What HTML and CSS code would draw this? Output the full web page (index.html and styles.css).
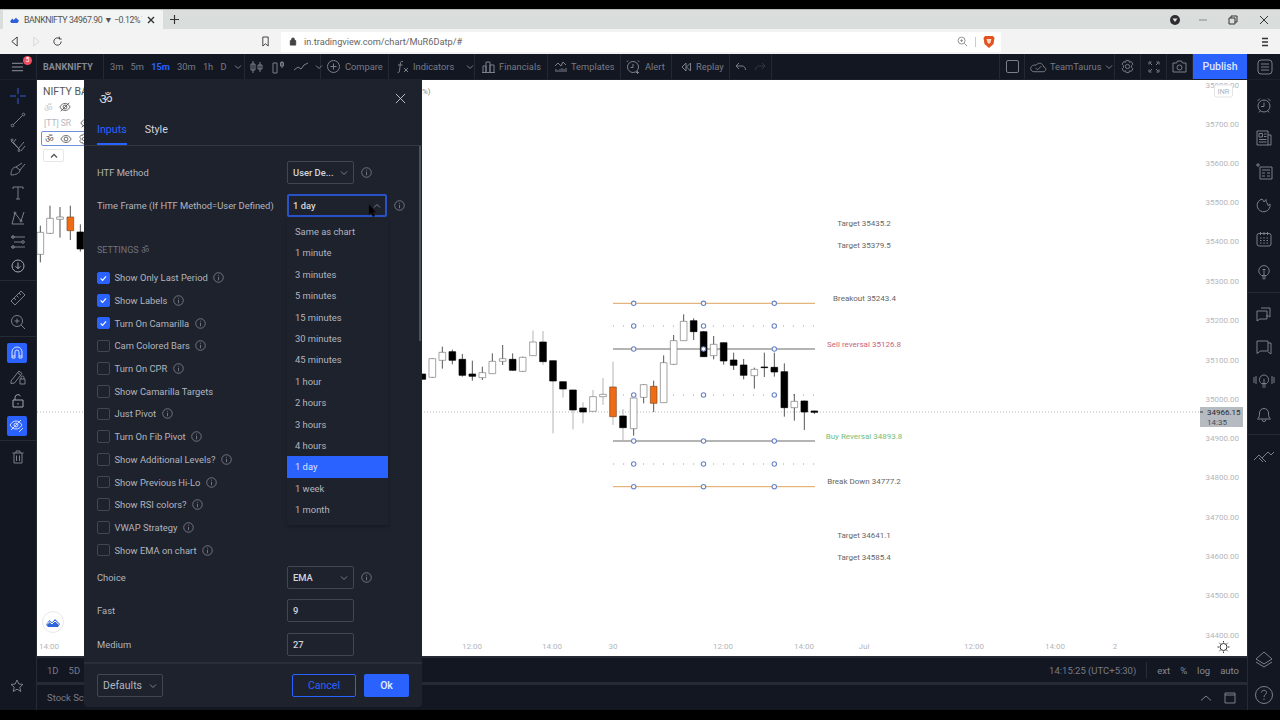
FILE: index.html
```html
<!DOCTYPE html>
<html lang="en">
<head>
<meta charset="utf-8">
<title>BANKNIFTY</title>
<link rel="stylesheet" href="styles.css">
</head>
<body>
<svg class="defs" width="0" height="0">
  <symbol id="info" viewBox="0 0 12 12"><circle cx="6" cy="6" r="5.2"/><path d="M6 5.2V9M6 3V4"/></symbol>
  <symbol id="chev" viewBox="0 0 8 8"><path d="M1 2.5L4 5.5L7 2.5"/></symbol>
  <symbol id="chevup" viewBox="0 0 8 8"><path d="M1 5.5L4 2.5L7 5.5"/></symbol>
  <symbol id="eye" viewBox="0 0 14 14"><path d="M1 7C3 3.500 5 3 7 3S11 3.500 13 7C11 10.500 9 11 7 11S3 10.500 1 7Z"/><circle cx="7" cy="7" r="2.200"/></symbol>
  <symbol id="eyeoff" viewBox="0 0 14 14"><path d="M1 7C3 3.500 5 3 7 3S11 3.500 13 7C11 10.500 9 11 7 11S3 10.500 1 7Z"/><circle cx="7" cy="7" r="2.200"/><path d="M2 12L12 2"/></symbol>
  <symbol id="gear" viewBox="0 0 16 16"><path d="M6.500 1.500H9.500L10 3.500L12 2.800L13.800 5.500L12.300 7V9L13.800 10.500L12 13.200L10 12.500L9.500 14.500H6.500L6 12.500L4 13.200L2.200 10.500L3.700 9V7L2.200 5.500L4 2.800L6 3.500Z"/><circle cx="8" cy="8" r="2.300"/></symbol>
  <symbol id="chat" viewBox="0 0 18 18"><path d="M6 3H15V12L13.500 11H11"/><path d="M2 6H12V14H5L2 16Z"/></symbol>
</svg>

<div class="screen">
  <div class="tabbar">
    <div class="tab">
      <svg class="favicon" viewBox="0 0 12 8"><path d="M0 6L3 2L5 4L8 1L12 5L10 8H2Z"/></svg>
      <span class="tab-title">BANKNIFTY 34967.90 ▼ −0.12% T</span>
      <svg class="ic-dark tab-x" viewBox="0 0 8 8"><path d="M1 1L7 7M7 1L1 7"/></svg>
    </div>
    <svg class="ic-dark tab-plus" viewBox="0 0 10 10"><path d="M5 0V10M0 5H10"/></svg>
    <div class="winctl">
      <svg class="profile" viewBox="0 0 10 10"><circle cx="5" cy="5" r="5"/><path class="profile-in" d="M2.500 3.500H7.500L5 7Z"/></svg>
      <svg class="ic-gray win-min" viewBox="0 0 10 10"><path d="M1 5H9"/></svg>
      <svg class="ic-dark win-res" viewBox="0 0 10 10"><path d="M3 3V1H9V7H7M1 3H7V9H1Z"/></svg>
      <svg class="ic-dark win-x" viewBox="0 0 10 10"><path d="M1 1L9 9M9 1L1 9"/></svg>
    </div>
  </div>

  <div class="navbar">
    <svg class="ic-dark nav-back" viewBox="0 0 10 12"><path d="M8 1L2 6L8 11Z"/></svg>
    <svg class="ic-pale nav-fwd" viewBox="0 0 10 12"><path d="M2 1L8 6L2 11Z"/></svg>
    <svg class="ic-dark nav-rel" viewBox="0 0 12 12"><path d="M10 6A4 4 0 1 1 8.500 2.900M8 .8V3.300H10.500"/></svg>
    <svg class="ic-dark nav-book" viewBox="0 0 10 12"><path d="M2 1H8V11L5 8.500L2 11Z"/></svg>
    <div class="urlbar">
      <svg class="lock" viewBox="0 0 8 10"><path d="M1 4H7V9H1ZM2.300 4V2.800A1.700 1.700 0 0 1 5.700 2.800V4"/></svg>
      <span class="url">in.tradingview.com/chart/MuR6Datp/#</span>
      <svg class="ic-gray url-zoom" viewBox="0 0 12 12"><circle cx="5" cy="5" r="3.800"/><path d="M8 8L11 11M3.500 5H6.500M5 3.500V6.500"/></svg>
      <span class="url-sep"></span>
      <svg class="brave" viewBox="0 0 12 14"><path d="M2 1H10L11.500 3L10.500 9L6 13L1.500 9L.5 3Z"/><path class="brave-in" d="M3.500 4H8.500L7.500 7.500L6 9L4.500 7.500Z"/></svg>
    </div>
    <svg class="ic-dark nav-menu" viewBox="0 0 8 10"><path d="M1 1.500H7M1 5H7M1 8.500H7"/></svg>
  </div>

  <header class="tvbar">
    <div class="seg seg-menu">
      <svg class="ic burger" viewBox="0 0 14 10"><path d="M1 1H13M1 5H13M1 9H13"/></svg>
      <span class="badge">5</span>
    </div>
    <div class="seg seg-sym"><b class="sym">BANKNIFTY</b></div>
    <div class="seg seg-int">
      <span>3m</span><span>5m</span><span class="int-on">15m</span><span>30m</span><span>1h</span><span>D</span>
      <svg class="ic chev chev-int"><use href="#chev"/></svg>
    </div>
    <div class="seg seg-type">
      <svg class="ic t16" viewBox="0 0 16 16"><path d="M4 2V14M2 5H6V11H2ZM11 3V13M9 6H13V10H9Z"/></svg>
      <svg class="ic t16" viewBox="0 0 16 16"><path d="M2 4H6V14H2ZM11 2V9M9.500 3.500H12.500V7H9.500Z"/></svg>
      <svg class="ic t16" viewBox="0 0 16 16"><path d="M1 11L5 8L8 10L11 6L15 4"/></svg>
      <svg class="ic chev"><use href="#chev"/></svg>
    </div>
    <div class="seg seg-cmp">
      <svg class="ic t13" viewBox="0 0 13 13"><circle cx="6.500" cy="6.500" r="6"/><path d="M6.500 3.500V9.500M3.500 6.500H9.500"/></svg>
      <span>Compare</span>
    </div>
    <div class="seg seg-ind">
      <svg class="ic t13" viewBox="0 0 13 13"><path d="M7 1.500C5 .8 4.500 2 4.300 4L3.500 11C3.300 12.500 2.500 12.800 1.500 12.300M2 5H6.500M8 8L12 12M12 8L8 12"/></svg>
      <span>Indicators</span>
      <svg class="ic chev chev-ind"><use href="#chev"/></svg>
    </div>
    <div class="seg seg-fin">
      <svg class="ic t13" viewBox="0 0 13 13"><path d="M1 12V6H4V12M4 12V2H8V12M8 12V5H12V12M0 12.500H13"/></svg>
      <span>Financials</span>
    </div>
    <div class="seg seg-tpl">
      <svg class="ic t13" viewBox="0 0 13 13"><path d="M1 6L4 3L7 6L9 2L12 5M2 9V12M4 10V12M6 9V12M8 8V12M10 9V12M12 8V12"/></svg>
      <span>Templates</span>
    </div>
    <div class="seg seg-alert">
      <svg class="ic t15" viewBox="0 0 15 15"><circle cx="7" cy="8" r="5.500"/><path d="M7 5V8.500H4.500M2 1.500L.8 3M12 1.500L13.200 3M11.500 12V15M10 13.500H13"/></svg>
      <span>Alert</span>
    </div>
    <div class="seg seg-rep">
      <svg class="ic t12" viewBox="0 0 12 12"><path d="M6 2L2 6L6 10ZM10.500 2L6.500 6L10.500 10Z"/></svg>
      <span>Replay</span>
    </div>
    <div class="seg seg-undo">
      <svg class="ic t12" viewBox="0 0 12 12"><path d="M4 2L1 5L4 8M1 5H7C9.500 5 10.500 7 10.500 9"/></svg>
      <svg class="ic-dim t12" viewBox="0 0 12 12"><path d="M8 2L11 5L8 8M11 5H5C2.500 5 1.500 7 1.500 9"/></svg>
    </div>
    <div class="tv-spacer"></div>
    <div class="seg seg-sq"><span class="square"></span></div>
    <div class="seg seg-team">
      <svg class="ic cloud" viewBox="0 0 18 12"><path d="M4 11H14C17 11 18 6.500 14.500 6C14 2 9 .5 6.500 4C2 3.500 .5 6 .8 8C1 10 2.500 11 4 11ZM6 7L8 9L12 5"/></svg>
      <span>TeamTaurus</span>
      <svg class="ic chev"><use href="#chev"/></svg>
    </div>
    <div class="seg seg-ic"><svg class="ic t15"><use href="#gear"/></svg></div>
    <div class="seg seg-ic"><svg class="ic t12" viewBox="0 0 12 12"><path d="M1 3.500V1H3.500M8.500 1H11V3.500M1 8.500V11H3.500M11 8.500V11H8.500M2 2L4 4M10 2L8 4M2 10L4 8M10 10L8 8"/></svg></div>
    <div class="seg seg-ic"><svg class="ic t15" viewBox="0 0 15 13"><path d="M1 3H4.500L5.500 1H9.500L10.500 3H14V12H1Z"/><circle cx="7.500" cy="7.500" r="2.500"/></svg></div>
    <button class="publish">Publish</button>
    <div class="seg-watch"><svg class="ic t16" viewBox="0 0 16 16"><rect x="1" y="1" width="14" height="14" rx="3"/><path d="M4 5H12M4 8H12M4 11H12"/></svg></div>
  </header>

  <div class="workspace">
    <aside class="lefttools">
      <div class="tgroup">
        <div class="tool"><svg class="ic-blue t16" viewBox="0 0 16 16"><path d="M8 0V6M8 10V16M0 8H6M10 8H16"/></svg></div>
        <div class="tool"><svg class="ic t16" viewBox="0 0 16 16"><circle cx="2.500" cy="13.500" r="1.300"/><circle cx="13.500" cy="2.500" r="1.300"/><path d="M3.500 12.500L12.500 3.500"/></svg></div>
        <div class="tool"><svg class="ic t16" viewBox="0 0 16 16"><path d="M1 4L8 11M6 2L3 6M14 5L8 12M15 9L11 14M3 5L10 13"/><circle cx="2" cy="3" r="1"/><circle cx="9" cy="13.500" r="1"/></svg></div>
        <div class="tool"><svg class="ic t16" viewBox="0 0 16 16"><path d="M1 14C1 9 3 6 6 6L10 9C10 12 6 14 1 14ZM6 6L12 2M10 9L15 3"/></svg></div>
        <div class="tool"><svg class="ic t16" viewBox="0 0 16 16"><path d="M3 4V2H13V4M8 2V14M6 14H10"/></svg></div>
        <div class="tool"><svg class="ic t16" viewBox="0 0 16 16"><path d="M2 14L5 3L11 11L14 2M2 14L14 14"/><circle cx="5" cy="3" r="1"/><circle cx="11" cy="11" r="1"/></svg></div>
        <div class="tool"><svg class="ic t16" viewBox="0 0 16 16"><path d="M1 3H15M4 8H12M1 13H15"/><circle cx="3" cy="3" r="1.300"/><circle cx="3" cy="13" r="1.300"/><circle cx="13" cy="8" r="1.300"/></svg></div>
        <div class="tool"><svg class="ic-hi t14" viewBox="0 0 14 14"><circle cx="7" cy="7" r="6"/><path d="M7 3.500V9.500M4.500 7.200L7 9.700L9.500 7.200"/></svg></div>
      </div>
      <div class="tgroup">
        <div class="tool"><svg class="ic t16" viewBox="0 0 16 16"><path d="M1 11L11 1L15 5L5 15ZM4 8L6 10M6.500 5.500L8.500 7.500M9 3L11 5"/></svg></div>
        <div class="tool"><svg class="ic t16" viewBox="0 0 16 16"><circle cx="7" cy="7" r="5.500"/><path d="M11 11L15 15M4.500 7H9.500M7 4.500V9.500"/></svg></div>
      </div>
      <div class="tgroup">
        <div class="tool tool-on"><svg class="ic-white t14" viewBox="0 0 14 14"><path d="M2 12V6A5 5 0 0 1 12 6V12H9V6A2 2 0 0 0 5 6V12Z"/><path d="M2 10H5M9 10H12"/></svg></div>
        <div class="tool"><svg class="ic t16" viewBox="0 0 16 16"><path d="M1 12L9 2L12 4.500L4.500 14L1 14.500ZM7.500 3.500L10.500 6"/><path d="M10 10H15V15H10ZM11 10V8.500A1.500 1.500 0 0 1 14 8.500V10"/></svg></div>
        <div class="tool"><svg class="ic-hi t14" viewBox="0 0 14 14"><path d="M2 6H12V13H2ZM4 6V3.500A3 3 0 0 1 9.500 2"/><path d="M7 9V10.500"/></svg></div>
        <div class="tool tool-on"><svg class="ic-white t16" viewBox="0 0 16 16"><path d="M1 7C3 4 5 3 7 3S11 4 13 7C11 10 9 11 7 11S3 10 1 7Z"/><circle cx="7" cy="7" r="2"/><path d="M2 12L12 2M10 14L14 10"/></svg></div>
      </div>
      <div class="tgroup tgroup-last">
        <div class="tool"><svg class="ic t14" viewBox="0 0 14 14"><path d="M1.500 3H12.500M5 3V1H9V3M3 3V13H11V3M5.500 5.500V11M8.500 5.500V11"/></svg></div>
      </div>
      <svg class="ic star" viewBox="0 0 14 14"><path d="M7 1L8.800 5L13 5.400L9.800 8.200L10.800 12.500L7 10.200L3.200 12.500L4.200 8.200L1 5.400L5.200 5Z"/></svg>
    </aside>

    <div class="center">
      <div class="chart">
        <svg class="chart-svg" viewBox="37 80 1210 576" preserveAspectRatio="none">
          <path class="priceline" d="M37 412H1200"/>
          <g transform="translate(30 80) scale(.33333)">
            <path class="wick" d="M31 437V547M60 377V462M90 381V473M121 377V480M151 433V515"/>
            <path class="white" d="M21 457h20v66h-20zM50 415h20v45h-20zM80 411h20v7h-20z"/>
            <path class="orange" d="M111 411h20v41h-20z"/>
            <path class="black" d="M141 456h20v51h-20z"/>
          </g>
          <path class="cam cam-o" d="M613 303.300H815M613 486.700H815"/>
          <path class="cam cam-d" d="M613 349H815M613 441H815"/>
          <path class="cam-dots" d="M613 326H815M613 395H815M613 464H815"/>
          <g transform="translate(420 280) scale(.33333)">
            <path class="wick" d="M37 235V293M67 200V266M97 209V253M127 222V290M157 242V302M187 260V300M217 220V281M248 195V255M278 220V272M308 230V275M641 355V467M671 313V370M701 302V396M731 226V368M761 165V254M791 103V182M821 115V180M851 153V231M881 168V238M911 188V254M941 218V270M971 237V298M1003 263V326M1033 218V291M1063 218V290M1093 250V410M1123 342V422M1153 362V450M1183 392V402"/>
            <path class="wick-pale" d="M339 152V228M369 153V255M399 242V460M429 305V353M459 330V448M489 367V430M519 330V395M549 294V375M579 245V435M609 387V483"/>
            <path class="white" d="M27 236h20v56h-20zM57 217h20v24h-20zM177 278h20v15h-20zM207 244h20v37h-20zM238 236h20v8h-20zM298 232h20v42h-20zM329 186h20v41h-20zM509 350h20v44h-20zM539 343h20v7h-20zM631 354h20v92h-20zM661 314h20v38h-20zM721 248h20v120h-20zM751 182h20v71h-20zM781 124h20v58h-20zM871 193h20v34h-20zM993 268h20v19h-20zM1113 364h20v19h-20z"/>
            <path class="black" d="M0 282h17v16h-17zM87 215h20v26h-20zM117 238h20v48h-20zM147 282h20v7h-20zM268 238h20v33h-20zM359 186h20v59h-20zM389 242h20v61h-20zM419 305h20v22h-20zM449 330h20v60h-20zM479 384h20v12h-20zM599 408h20v35h-20zM811 122h20v33h-20zM841 155h20v75h-20zM901 188h20v55h-20zM931 240h20v16h-20zM961 255h20v31h-20zM1023 261h20v2h-20zM1053 262h20v14h-20zM1083 275h20v108h-20zM1143 363h20v33h-20zM1173 393h20v4h-20z"/>
            <path class="orange" d="M569 321h20v89h-20zM691 319h20v51h-20z"/>
          </g>
          <g id="rowdots" class="cdots"><circle cx="633.700" cy="303.300" r="2.200"/><circle cx="703.500" cy="303.300" r="2.200"/><circle cx="774.300" cy="303.300" r="2.200"/></g>
          <use href="#rowdots" y="22.700"/>
          <use href="#rowdots" y="45.700"/>
          <use href="#rowdots" y="91.700"/>
          <use href="#rowdots" y="137.700"/>
          <use href="#rowdots" y="160.700"/>
          <use href="#rowdots" y="183.400"/>

          <g class="lab">
            <text x="864" y="226">Target 35435.2</text>
            <text x="864" y="248">Target 35379.5</text>
            <text x="864.500" y="301">Breakout 35243.4</text>
            <text class="lab-red" x="864" y="347">Sell reversal 35126.8</text>
            <text class="lab-green" x="864" y="439">Buy Reversal 34893.8</text>
            <text x="864" y="484">Break Down 34777.2</text>
            <text x="864" y="538">Target 34641.1</text>
            <text x="864" y="560">Target 34585.4</text>
          </g>
          <g class="axis">
            <text x="1239" y="87.500">35800.00</text>
            <text x="1239" y="127">35700.00</text>
            <text x="1239" y="166">35600.00</text>
            <text x="1239" y="205">35500.00</text>
            <text x="1239" y="244">35400.00</text>
            <text x="1239" y="284">35300.00</text>
            <text x="1239" y="323">35200.00</text>
            <text x="1239" y="362.500">35100.00</text>
            <text x="1239" y="402">35000.00</text>
            <text x="1239" y="441">34900.00</text>
            <text x="1239" y="480">34800.00</text>
            <text x="1239" y="520">34700.00</text>
            <text x="1239" y="559">34600.00</text>
            <text x="1239" y="598">34500.00</text>
            <text x="1239" y="637.500">34400.00</text>
          </g>
          <g class="times">
            <text x="49" y="649">14:00</text>
            <text x="472" y="649">12:00</text>
            <text x="552" y="649">14:00</text>
            <text x="613" y="649">30</text>
            <text x="723" y="649">12:00</text>
            <text x="804" y="649">14:00</text>
            <text x="864" y="649">Jul</text>
            <text x="974" y="649">12:00</text>
            <text x="1055" y="649">14:00</text>
            <text x="1115" y="649">2</text>
          </g>
          <text class="pct" x="422" y="94">%)</text>
          <rect class="tag" x="1200" y="407" width="43" height="20"/>
          <path class="tagtick" d="M1200 412H1203"/>
          <text class="tag-a" x="1207" y="415">34966.15</text>
          <text class="tag-b" x="1207" y="424.500">14:35</text>
          <rect class="inr" x="1214.500" y="85" width="18" height="12" rx="2"/>
          <text class="inr-t" x="1223.500" y="93.500">INR</text>
          <g class="sun" transform="translate(1223.500 647)">
            <circle r="3.500"/>
            <path d="M0 -6V-4.500M0 6V4.500M-6 0H-4.500M6 0H4.500M-4.200 -4.200L-3.200 -3.200M4.200 -4.200L3.200 -3.200M-4.200 4.200L-3.200 3.200M4.200 4.200L3.200 3.200"/>
          </g>
        </svg>

        <div class="legend">
          <div class="lg-title">NIFTY BA</div>
          <div class="lg-row"><span class="om om-pale">ॐ</span><svg class="ic-dk2 t12"><use href="#eyeoff"/></svg></div>
          <div class="lg-row"><span class="lg-tt">[TT] SR</span><svg class="ic-dk2 t12 lg-tt-eye"><use href="#eyeoff"/></svg></div>
          <div class="lg-row lg-sel"><span class="om">ॐ</span><svg class="ic-dk2 t12"><use href="#eye"/></svg><svg class="ic-dk2 t12"><use href="#gear"/></svg></div>
          <div class="lg-collapse"><svg class="ic-dk2 lg-up"><use href="#chevup"/></svg></div>
        </div>
        <div class="logo-bubble"><svg class="bubble-ic" viewBox="0 0 14 9"><path d="M0 6.500L3.500 2L6 4.500L9 1L14 6L12 9H2Z"/><path class="bubble-line" d="M1 6.500L3.500 3.800L6 6L9 3L13 6.500"/></svg></div>
      </div>

      <div class="bar1">
        <span>1D</span><span>5D</span>
        <div class="bar-spacer"></div>
        <span class="clock">14:15:25 (UTC+5:30)</span>
        <span class="bar-sep"></span>
        <span class="opt">ext</span><span class="opt">%</span><span class="opt">log</span><span class="opt">auto</span>
      </div>
      <div class="bar2">
        <span>Stock Screener</span>
        <div class="bar-spacer"></div>
        <svg class="ic bar-up" viewBox="0 0 12 8"><path d="M1 6.500L6 2L11 6.500"/></svg>
        <svg class="ic bar-win" viewBox="0 0 12 12"><path d="M1 1H11V11H1ZM1 3H11"/></svg>
      </div>
    </div>

    <aside class="righttools">
      <div class="tgroup-r">
        <div class="rtool"><svg class="ic t16" viewBox="0 0 16 16"><circle cx="8" cy="9" r="6"/><path d="M8 5.500V9.500H5M1.500 4L4 1.500M14.500 4L12 1.500M4 14L3 15.500M12 14L13 15.500"/></svg></div>
        <div class="rtool"><svg class="ic t16" viewBox="0 0 16 16"><path d="M1 1H12V15H1ZM12 5H15V15H12M3 3.500H6.500V7H3ZM8 4H10.500M8 6.500H10.500M3 9.500H10.500M3 12H10.500"/></svg></div>
        <div class="rtool"><svg class="ic t18" viewBox="0 0 18 18"><path d="M5 5V4H17V16H5ZM7 7H15M7 10H10M12 10H15M7 13H10M12 13H15M3 0V4M1 2H5"/></svg></div>
        <div class="rtool"><svg class="ic t16" viewBox="0 0 16 16"><path d="M6 2A6.500 6.500 0 1 0 14 7L12 8.500C11.500 6 10 5.500 10 2.500L8 5C7.500 4 7 3 6 2Z"/></svg></div>
        <div class="rtool"><svg class="ic t16" viewBox="0 0 16 16"><rect x="1" y="2.500" width="14" height="12.500" rx="2"/><path d="M4.500 1V4M8 1V4M11.500 1V4M4 7H5.500M7.300 7H8.800M10.500 7H12M4 9.500H5.500M7.300 9.500H8.800M10.500 9.500H12M4 12H5.500M7.300 12H8.800M10.500 12H12"/></svg></div>
        <div class="rtool"><svg class="ic t16" viewBox="0 0 16 16"><path d="M5.500 11.500C3.500 10 2.800 8.500 2.800 6.800A5.200 5.200 0 0 1 13.200 6.800C13.200 8.500 12.500 10 10.500 11.500ZM6 13H10M6.500 14.800H9.500M6.500 5.500H9.500M8 5.500V11"/></svg></div>
      </div>
      <div class="tgroup-r">
        <div class="rtool"><svg class="ic t18"><use href="#chat"/></svg></div>
        <div class="rtool"><svg class="ic t18" viewBox="0 0 18 18"><path d="M2 3H13V13H5.500L2 15.500ZM13 5H16V16L13 13.800"/></svg></div>
        <div class="rtool"><svg class="ic t22" viewBox="0 0 22 18"><path d="M8.500 11.500C7 10.500 6.500 9 6.500 7.500A4.500 4.500 0 0 1 15.500 7.500C15.500 9 15 10.500 13.500 11.500ZM9 13H13M9.500 15H12.500M11 7V11M1 5V11M3 4V12M19 4V12M21 5V11"/></svg></div>
        <div class="rtool"><svg class="ic t16" viewBox="0 0 16 16"><path d="M1.500 13C3 12 3.500 10.500 3.500 7A4.500 4.500 0 0 1 12.500 7C12.500 10.500 13 12 14.500 13ZM6 13.500A2 2 0 0 0 10 13.500"/></svg></div>
      </div>
      <div class="tgroup-r">
        <div class="rtool"><svg class="ic t22" viewBox="0 0 22 18"><path d="M1 13L6 8L11 13L13 15M9 11L15 5L18 8L21 5M6 11L10 15"/></svg></div>
      </div>
      <div class="rt-bottom">
        <svg class="ic t20" viewBox="0 0 20 20"><path d="M10 2L18 9L10 14L2 9ZM2 12L10 17L18 12"/></svg>
        <svg class="ic t20" viewBox="0 0 20 20"><circle cx="10" cy="10" r="8.500"/><path d="M7.500 7.500C7.500 4.500 12.500 4.500 12.500 7.500C12.500 9.500 10 9.500 10 12M10 13.500V15"/></svg>
      </div>
    </aside>
  </div>

  <section class="dialog">
    <div class="dlg-head">
      <div class="dlg-title"><span class="om om-title">ॐ</span>
        <svg class="ic-close" viewBox="0 0 12 12"><path d="M1 1L11 11M11 1L1 11"/></svg>
      </div>
      <div class="dlg-tabs"><span class="dtab dtab-on">Inputs</span><span class="dtab">Style</span></div>
    </div>
    <div class="dlg-body">
      <div class="scrollthumb"></div>
      <div class="frow">
        <span class="flabel">HTF Method</span>
        <div class="sel"><span>User De...</span><svg class="ic chev"><use href="#chev"/></svg></div>
        <svg class="inf"><use href="#info"/></svg>
      </div>
      <div class="frow">
        <span class="flabel">Time Frame (If HTF Method=User Defined)</span>
        <div class="sel sel-open"><span>1 day</span><svg class="ic chev"><use href="#chevup"/></svg>
          <svg class="cursor" viewBox="0 0 10 15"><path d="M1 0V12L3.500 9.500L5.500 14L7.500 13L5.500 8.800H9Z"/></svg>
          <ul class="dropdown">
            <li>Same as chart</li><li>1 minute</li><li>3 minutes</li><li>5 minutes</li><li>15 minutes</li><li>30 minutes</li><li>45 minutes</li><li>1 hour</li><li>2 hours</li><li>3 hours</li><li>4 hours</li><li class="dd-on">1 day</li><li>1 week</li><li>1 month</li>
          </ul>
        </div>
        <svg class="inf"><use href="#info"/></svg>
      </div>
      <div class="settings">SETTINGS <span class="om">ॐ</span></div>
      <label class="crow"><span class="box box-on"><svg viewBox="0 0 12 12"><path d="M3 6.200L5.200 8.400L9.200 3.800"/></svg></span>Show Only Last Period<svg class="inf"><use href="#info"/></svg></label>
      <label class="crow"><span class="box box-on"><svg viewBox="0 0 12 12"><path d="M3 6.200L5.200 8.400L9.200 3.800"/></svg></span>Show Labels<svg class="inf"><use href="#info"/></svg></label>
      <label class="crow"><span class="box box-on"><svg viewBox="0 0 12 12"><path d="M3 6.200L5.200 8.400L9.200 3.800"/></svg></span>Turn On Camarilla<svg class="inf"><use href="#info"/></svg></label>
      <label class="crow"><span class="box"></span>Cam Colored Bars<svg class="inf"><use href="#info"/></svg></label>
      <label class="crow"><span class="box"></span>Turn On CPR<svg class="inf"><use href="#info"/></svg></label>
      <label class="crow"><span class="box"></span>Show Camarilla Targets</label>
      <label class="crow"><span class="box"></span>Just Pivot<svg class="inf"><use href="#info"/></svg></label>
      <label class="crow"><span class="box"></span>Turn On Fib Pivot<svg class="inf"><use href="#info"/></svg></label>
      <label class="crow"><span class="box"></span>Show Additional Levels?<svg class="inf"><use href="#info"/></svg></label>
      <label class="crow"><span class="box"></span>Show Previous Hi-Lo<svg class="inf"><use href="#info"/></svg></label>
      <label class="crow"><span class="box"></span>Show RSI colors?<svg class="inf"><use href="#info"/></svg></label>
      <label class="crow"><span class="box"></span>VWAP Strategy<svg class="inf"><use href="#info"/></svg></label>
      <label class="crow"><span class="box"></span>Show EMA on chart<svg class="inf"><use href="#info"/></svg></label>
      <div class="frow frow-choice">
        <span class="flabel">Choice</span>
        <div class="sel"><span>EMA</span><svg class="ic chev"><use href="#chev"/></svg></div>
        <svg class="inf"><use href="#info"/></svg>
      </div>
      <div class="frow frow-fast"><span class="flabel">Fast</span><div class="sel"><span>9</span></div></div>
      <div class="frow"><span class="flabel">Medium</span><div class="sel"><span>27</span></div></div>
    </div>
    <div class="dlg-foot">
      <div class="btn btn-def">Defaults<svg class="ic chev"><use href="#chev"/></svg></div>
      <div class="foot-spacer"></div>
      <div class="btn btn-cancel">Cancel</div>
      <div class="btn btn-ok">Ok</div>
    </div>
  </section>
</div>
</body>
</html>
```
FILE: styles.css
```css
* { box-sizing: border-box; }
html, body { margin: 0; height: 720px; overflow: hidden; background: #000; }
body { font-family: Roboto, "Noto Sans", sans-serif; font-size: 9.5px; }
.defs { position: absolute; }
svg { display: block; flex: none; }
.screen { position: relative; height: 720px; padding: 9px 0 10px; display: flex; flex-direction: column; }

/* shared icon strokes */
.ic, .ic-dark, .ic-gray, .ic-pale, .ic-blue, .ic-hi, .ic-white, .ic-dim, .ic-dk2, .inf, .ic-close { fill: none; stroke-width: 1; }
.ic { stroke: #7b7f8a; }
.ic-dark { stroke: #333; }
.ic-gray { stroke: #8a8a8a; }
.ic-pale { stroke: #d4d4d4; }
.ic-blue { stroke: #2f5fd8; }
.ic-hi { stroke: #a5a8b0; }
.ic-white { stroke: #d8def5; }
.ic-dim { stroke: #33373f; }
.ic-dk2 { stroke: #555; }
.t12 { width: 12px; height: 12px; }
.t13 { width: 13px; height: 13px; }
.t14 { width: 14px; height: 14px; }
.t15 { width: 15px; height: 15px; }
.t16 { width: 16px; height: 16px; }
.t18 { width: 18px; height: 18px; }
.t20 { width: 20px; height: 20px; }
.t22 { width: 22px; height: 18px; }
.chev { width: 8px; height: 8px; }

/* browser chrome */
.tabbar { height: 20px; flex: none; display: flex; align-items: stretch; padding-left: 3px; background: #d9dddc; border-top: 1px solid #b9bcbc; }
.tab { width: 160px; display: flex; align-items: center; background: #f2f3f3; padding: 0 5px 0 6px; gap: 5px; }
.favicon { width: 9px; height: 6px; fill: #2f5fd8; margin-left: 1px; }
.tab-title { width: 118px; overflow: hidden; white-space: nowrap; color: #555; font-size: 8.800px; letter-spacing: -.45px; }
.tab-x { width: 8px; height: 8px; stroke-width: 1.400; }
.tab-plus { width: 9px; height: 9px; margin: 5px 0 0 7px; stroke-width: 1.300; }
.winctl { margin-left: auto; display: flex; align-items: center; padding-right: 11px; }
.profile { width: 10px; height: 10px; fill: #2e2e30; margin-right: 18px; }
.profile-in { fill: #e4e4e4; }
.win-min { width: 10px; height: 10px; margin-right: 20px; }
.win-res { width: 10px; height: 10px; margin-right: 21px; }
.win-x { width: 10px; height: 10px; }

.navbar { height: 25px; flex: none; display: flex; align-items: center; background: #f3f3f3; padding-left: 10px; }
.nav-back { width: 9px; height: 11px; }
.nav-fwd { width: 9px; height: 11px; margin-left: 13px; }
.nav-rel { width: 11px; height: 11px; margin-left: 11px; }
.nav-book { width: 9px; height: 11px; margin-left: 198px; }
.urlbar { width: 720px; height: 20px; margin-left: 11px; background: #fff; display: flex; align-items: center; padding-left: 8px; }
.lock { width: 8px; height: 9px; fill: #444; stroke: #444; }
.url { margin-left: 7px; color: #666; font-size: 9.200px; }
.url-zoom { width: 11px; height: 11px; margin-left: auto; margin-right: -2px; }
.url-sep { width: 1px; height: 10px; background: #ccc; margin: 0 7px 0 9px; }
.brave { width: 12px; height: 14px; fill: #e0521f; margin-right: 6px; }
.brave-in { fill: #f8d9c8; }
.nav-menu { width: 8px; height: 10px; margin-left: 260px; stroke-width: 1.300; }

/* tradingview header */
.tvbar { height: 26px; flex: none; display: flex; background: #131722; border-bottom: 1px solid #1c2029; color: #787b86; font-size: 9.300px; }
.seg { display: flex; align-items: center; border-right: 1px solid #242832; position: relative; flex: none; }
.seg-menu { width: 37px; padding-left: 11px; }
.burger { width: 13px; height: 10px; stroke: #9a9da6; }
.badge { position: absolute; left: 23px; top: 2px; width: 9px; height: 9px; border-radius: 50%; background: #ef4f5f; color: #fff; font-size: 6.500px; line-height: 9px; text-align: center; }
.seg-sym { width: 67px; padding-left: 6px; }
.sym { font-weight: 700; color: #858995; font-size: 9px; letter-spacing: .1px; }
.seg-int { width: 141px; padding-left: 6px; gap: 7.200px; }
.int-on { color: #2962ff; font-weight: 700; }
.chev-int { margin-left: auto; margin-right: 4px; }
.seg-type { width: 76px; padding-left: 4px; gap: 6px; }
.seg-cmp { width: 68px; padding-left: 6px; gap: 5px; }
.seg-ind { width: 86px; padding-left: 7px; gap: 4px; }
.chev-ind { margin-left: 8px; }
.seg-fin { width: 73px; padding-left: 7px; gap: 4px; }
.seg-tpl { width: 73px; padding-left: 6px; gap: 4px; }
.seg-alert { width: 51px; padding-left: 5px; gap: 4px; }
.seg-rep { width: 58px; padding-left: 8px; gap: 4px; }
.seg-undo { width: 42px; padding-left: 5px; gap: 7px; }
.tv-spacer { flex: 1; }
.seg-sq { width: 26px; justify-content: center; border-left: 1px solid #242832; }
.square { width: 13px; height: 13px; border: 1px solid #7b7f8a; border-radius: 2px; }
.seg-team { width: 90px; padding-left: 5px; gap: 3px; }
.cloud { width: 17px; height: 12px; }
.seg-ic { width: 26px; justify-content: center; }
.publish { width: 54px; flex: none; border: 0; padding: 0; margin: 0; background: #2962ff; color: #dfe7ff; font: 500 10.500px Roboto, sans-serif; }
.seg-watch { width: 33px; flex: none; display: flex; align-items: center; justify-content: center; padding-left: 2px; }

/* page */
.workspace { flex: 1; display: flex; min-height: 0; background: #262a33; }
.lefttools { width: 36px; flex: none; background: #131722; display: flex; flex-direction: column; padding-top: 4px; margin-right: 1px; }
.tgroup { border-bottom: 1px solid #262a33; padding-bottom: 2px; margin-bottom: 4px; }
.tgroup-last { border: 0; }
.tool { height: 24.300px; display: flex; align-items: center; justify-content: center; }
.tool-on { width: 20px; height: 20px; margin: 2px 8px 2px 7px; background: #2962ff; border-radius: 2px; }
.star { width: 14px; height: 14px; margin: auto 0 17px 10px; }

.center { flex: 1; min-width: 0; display: flex; flex-direction: column; }
.chart { flex: 1; min-height: 0; position: relative; background: #fff; overflow: hidden; }
.chart-svg { width: 100%; height: 100%; }
.wick { fill: none; stroke: #555; stroke-width: 3; }
.wick-pale { fill: none; stroke: #b4b4b4; stroke-width: 3; }
.white { fill: #fff; stroke: #777; stroke-width: 2; }
.black { fill: #000; stroke: #000; stroke-width: 2; }
.orange { fill: #ef6c15; stroke: #7a4a25; stroke-width: 2; }
.priceline { stroke: #b5b5b5; stroke-width: 1; stroke-dasharray: 1 2; fill: none; }
.cam { fill: none; stroke-width: 1; }
.cam-o { stroke: #dda35c; }
.cam-d { stroke: #6a6a6a; stroke-width: 1.200; }
.cam-dots { fill: none; stroke: #a0a0a0; stroke-width: 1; stroke-dasharray: 1 9; }
.cdots { fill: #fff; stroke: #6b84c4; stroke-width: 1.100; }
.lab { font: 8px Roboto, sans-serif; fill: #666; text-anchor: middle; }
.lab-red { fill: #c9637e; }
.lab-green { fill: #78bc78; }
.axis { font: 8px Roboto, sans-serif; fill: #b4b6bc; text-anchor: end; }
.times { font: 8px Roboto, sans-serif; fill: #b4b6bc; text-anchor: middle; }
.pct { font: 8px Roboto, sans-serif; fill: #888; }
.tag { fill: #b6bbc2; }
.tagtick { stroke: #333; fill: none; }
.tag-a { font: 8px Roboto, sans-serif; fill: #26282e; }
.tag-b { font: 8px Roboto, sans-serif; fill: #4a4d55; }
.inr { fill: #fff; stroke: #e3e4e8; }
.inr-t { font: 7.500px Roboto, sans-serif; fill: #b0b3ba; text-anchor: middle; }
.sun { fill: none; stroke: #333; stroke-width: 1; }

.legend { position: absolute; left: 4px; top: 5px; width: 60px; color: #555; }
.lg-title { font-size: 10.500px; line-height: 14px; white-space: nowrap; color: #555; padding-left: 2px; }
.lg-row { height: 16px; display: flex; align-items: center; gap: 6px; white-space: nowrap; padding-left: 3px; }
.lg-tt { color: #b3b6bd; font-size: 8.500px; }
.lg-tt-eye { margin-left: 3px; }
.lg-sel { width: 70px; height: 15px; margin-top: 0; border: 1px solid #6f8fd8; border-radius: 2px; }
.lg-collapse { width: 21px; height: 13px; margin: 3px 0 0 2px; border: 1px solid #e6e7ea; border-radius: 2px; display: flex; align-items: center; justify-content: center; }
.lg-up { width: 8px; height: 8px; stroke-width: 1.300; }
.om { font-family: "Noto Sans", "DejaVu Sans", sans-serif; }
.om-pale { color: #c4c6cb; }
.logo-bubble { position: absolute; left: 5px; top: 531px; width: 22px; height: 22px; border-radius: 50%; background: #fff; border: 1px solid #e8e9ee; display: flex; align-items: center; justify-content: center; }
.bubble-ic { width: 14px; height: 9px; fill: #2f66d8; }
.bubble-line { fill: none; stroke: #fff; stroke-width: 1; }

.bar1 { height: 24px; flex: none; margin-top: 2px; background: #131722; display: flex; align-items: center; padding: 0 8px 0 10px; color: #787b86; gap: 10px; font-size: 9.500px; }
.bar2 { height: 25px; flex: none; margin-top: 3px; background: #131722; display: flex; align-items: center; padding: 0 11px 0 10px; color: #787b86; }
.bar-spacer { flex: 1; }
.bar-sep { width: 1px; height: 16px; background: #2a2e39; margin: 0; }
.opt { color: #868a94; }
.bar-up { width: 12px; height: 8px; margin-right: 12px; }
.bar-win { width: 12px; height: 12px; }

.righttools { width: 32px; flex: none; margin-left: 1px; background: #131722; display: flex; flex-direction: column; padding-top: 8px; }
.tgroup-r { border-bottom: 1px solid #262a33; padding-bottom: 3px; margin-bottom: 4px; }
.tgroup-r:nth-child(3) { border: 0; }
.rtool { height: 33.500px; display: flex; align-items: center; justify-content: center; }
.rt-bottom { margin-top: auto; padding-bottom: 5px; display: flex; flex-direction: column; align-items: center; gap: 15px; }

/* dialog */
.dialog { position: absolute; left: 84px; top: 79px; width: 338px; height: 628px; background: #1e222d; display: flex; flex-direction: column; border-radius: 0 0 4px 4px; color: #b2b5be; font-size: 9.400px; }
.dlg-head { height: 67px; flex: none; border-bottom: 1px solid #343843; padding: 0 13px; }
.dlg-title { height: 38px; display: flex; align-items: center; justify-content: space-between; padding: 0 3px 0 2px; }
.om-title { font-size: 15px; color: #d1d4dc; }
.ic-close { width: 11px; height: 11px; stroke: #c8cad0; }
.dlg-tabs { display: flex; gap: 18px; height: 28px; }
.dtab { font-size: 10.700px; line-height: 26px; color: #d1d4dc; height: 28px; }
.dtab-on { color: #2962ff; border-bottom: 2px solid #2962ff; }
.dlg-body { flex: 1; min-height: 0; position: relative; padding: 15px 0 0 13px; }
.scrollthumb { position: absolute; right: 1px; top: 0; width: 2px; height: 195px; background: #4d515b; }
.frow { display: flex; align-items: center; height: 23px; margin-bottom: 10px; }
.frow-fast { margin-bottom: 11px; }
.flabel { width: 190px; flex: none; white-space: nowrap; }
.sel { width: 67px; height: 23px; flex: none; border: 1px solid #434651; border-radius: 2px; display: flex; align-items: center; justify-content: space-between; padding: 0 5px 0 5px; color: #d1d4dc; position: relative; font-weight: 500; }
.sel-open { width: 100px; border: 2px solid #2a52c8; padding: 0 4px; }
.inf { width: 11px; height: 11px; stroke: #787b86; margin-left: 7px; }
.crow .inf { margin-left: 5.500px; }
.cursor { position: absolute; left: 79px; top: 8px; width: 9px; height: 14px; fill: #000; stroke: #222; stroke-width: .5; }
.dropdown { position: absolute; left: -2px; top: 25px; width: 101px; margin: 0; padding: 0; list-style: none; background: #1e222d; box-shadow: 0 2px 4px rgba(0,0,0,.25); z-index: 2; padding-bottom: 5px; font-weight: 400; }
.dropdown li { height: 21.400px; line-height: 21.400px; padding-left: 8px; color: #b2b5be; }
.dropdown .dd-on { background: #2962ff; color: #dce4ff; }
.settings { height: 12px; margin-top: 27px; margin-bottom: 10.500px; line-height: 12px; color: #6f7380; font-size: 9px; }
.crow { display: flex; align-items: center; height: 22.700px; white-space: nowrap; }
.box { width: 12.500px; height: 12.500px; border: 1px solid #434651; border-radius: 2px; margin-right: 5px; flex: none; }
.box-on { background: #2962ff; border-color: #2962ff; }
.box-on svg { width: 100%; height: 100%; fill: none; stroke: #fff; stroke-width: 1.300; }
.frow-choice { margin-top: 5px; }
.dlg-foot { height: 45px; flex: none; border-top: 2px solid #2a2e39; display: flex; align-items: flex-start; padding: 10px 13px 0; gap: 8px; }
.foot-spacer { flex: 1; }
.btn { height: 23px; border-radius: 2px; display: flex; align-items: center; justify-content: center; font-size: 10.500px; }
.btn-def { width: 66px; border: 1px solid #434651; color: #b2b5be; justify-content: space-between; padding: 0 5px 0 5px; }
.btn-cancel { width: 64px; border: 1px solid #2962ff; color: #2962ff; }
.btn-ok { width: 45px; background: #2962ff; color: #e6ecff; font-weight: 500; }
```
